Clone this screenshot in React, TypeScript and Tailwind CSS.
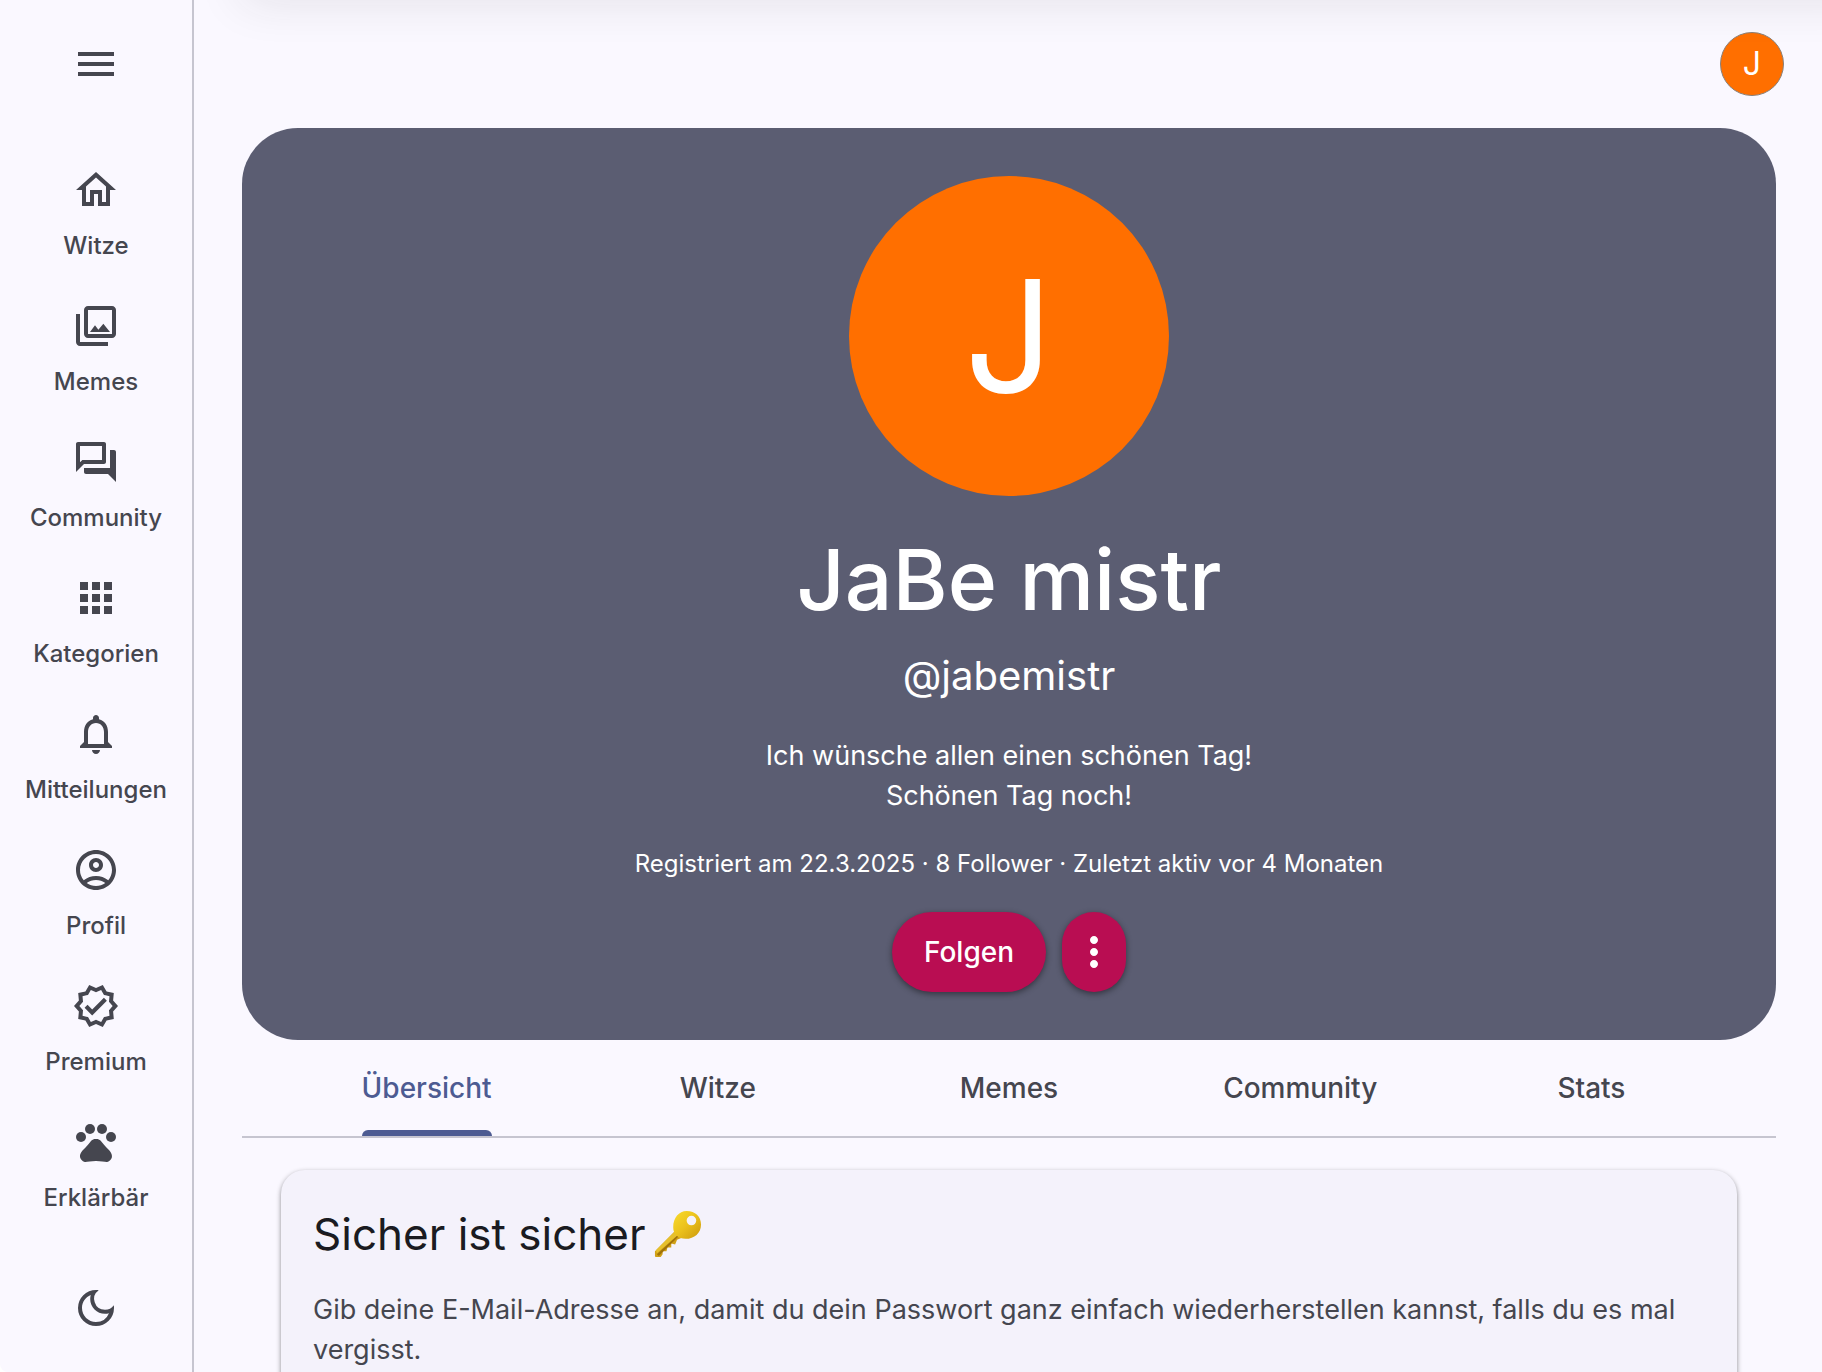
import { MdMenu, MdOutlineHome, MdOutlinePhotoLibrary, MdOutlineForum, MdApps, MdNotificationsNone, MdOutlineAccountCircle, MdOutlineVerified, MdPets, MdOutlineDarkMode, MdMoreVert } from 'react-icons/md';

const navItems = [
  { label: 'Witze', Icon: MdOutlineHome },
  { label: 'Memes', Icon: MdOutlinePhotoLibrary },
  { label: 'Community', Icon: MdOutlineForum },
  { label: 'Kategorien', Icon: MdApps },
  { label: 'Mitteilungen', Icon: MdNotificationsNone },
  { label: 'Profil', Icon: MdOutlineAccountCircle },
  { label: 'Premium', Icon: MdOutlineVerified },
  { label: 'Erklärbär', Icon: MdPets },
];

const tabs = ['Übersicht', 'Witze', 'Memes', 'Community', 'Stats'];

function KeyIcon() {
  return (
    <svg viewBox="0 0 50 50" className="size-12 shrink-0" role="img" aria-label="Schlüssel">
      <defs>
        <linearGradient id="keyBow" x1="0" y1="0" x2="1" y2="1">
          <stop offset="0" stopColor="#f9dc2e" />
          <stop offset="0.5" stopColor="#ebc11c" />
          <stop offset="1" stopColor="#cb980e" />
        </linearGradient>
      </defs>
      <path d="M22 22 L1 43 V48 Q1 49 2 49 H7 L9 46 L9 43 L13 43 L14 39 L18 39 L18 35 L22 36 L24 31 L29 29 Z" fill="#d0a016" />
      <path d="M22 22 L2 42 L3 45 L26 25 Z" fill="#e6c02c" />
      <path d="M3 46 L25 26 L26 27 L5 48 Z" fill="#a07208" />
      <path fillRule="evenodd" d="M34 1 C43 1 49 7 49 15 C49 24 42 30 33 30 C25 30 20 25 20 18 C20 8 26 1 34 1 Z M39 6 A5 5 0 1 0 39 16 A5 5 0 1 0 39 6 Z" fill="url(#keyBow)" />
    </svg>
  );
}

export default function App() {
  return (
    <div className="h-screen overflow-hidden bg-white font-['Inter','Liberation_Sans',sans-serif] text-[#45464f]">
      <div className="flex h-full overflow-hidden rounded-bl-lg bg-[#faf8ff]">
        <aside className="flex w-[194px] shrink-0 flex-col items-center border-r-2 border-[#c6c5d0]">
          <button type="button" aria-label="Menü" className="flex h-32 w-full items-center justify-center">
            <MdMenu className="size-12" />
          </button>
          <nav className="flex w-full flex-col pt-[38px]">
            {navItems.map(({ label, Icon }) => (
              <a key={label} href="#" className="flex h-[136px] flex-col items-center gap-4">
                <Icon className="size-12" />
                <span className="text-2xl font-medium">{label}</span>
              </a>
            ))}
          </nav>
          <button type="button" aria-label="Dunkles Design" className="mt-[30px] flex size-12 items-center justify-center">
            <MdOutlineDarkMode className="size-12" />
          </button>
        </aside>

        <main className="relative min-w-0 flex-1 overflow-hidden">
          <div className="pointer-events-none absolute -top-10 -right-12 left-12 h-10 shadow-[0_0_48px_rgba(40,40,40,0.12)]" />
          <header className="flex h-32 items-center justify-end px-[38px]">
            <button type="button" aria-label="Konto" className="flex size-16 items-center justify-center rounded-full border border-[#8a8078] bg-[#ff6f00] text-[32px] text-white">
              J
            </button>
          </header>

          <div className="mr-[46px] ml-12">
            <section className="flex flex-col items-center rounded-[56px] bg-[#5b5d72] py-12 text-center text-white">
              <div className="flex size-80 items-center justify-center rounded-full bg-[#ff6f00] text-[156px] leading-none">J</div>
              <h1 className="mt-8 text-[84px] leading-[104px] font-medium">JaBe mistr</h1>
              <p className="mt-4 text-[40px] leading-[56px]">@jabemistr</p>
              <p className="mt-8 text-[27px] leading-10">
                Ich wünsche allen einen schönen Tag!
                <br />
                Schönen Tag noch!
              </p>
              <p className="mt-8 text-2xl">Registriert am 22.3.2025 · 8 Follower · Zuletzt aktiv vor 4 Monaten</p>
              <div className="mt-8 flex gap-4">
                <button type="button" className="flex h-20 items-center rounded-[40px] bg-[#b90d52] px-8 text-[28px] font-medium shadow-[0_2px_6px_rgba(0,0,0,0.45)]">
                  Folgen
                </button>
                <button type="button" aria-label="Mehr" className="flex h-20 w-16 items-center justify-center rounded-[40px] bg-[#b90d52] shadow-[0_2px_6px_rgba(0,0,0,0.45)]">
                  <MdMoreVert className="size-12" />
                </button>
              </div>
            </section>

            <div role="tablist" className="flex h-[98px] border-b-2 border-[#c6c5d0] px-[39px]">
              {tabs.map((tab, i) => (
                <button key={tab} type="button" role="tab" aria-selected={i === 0} className="group flex flex-1 justify-center text-[28px] font-medium aria-selected:text-[#4d5b92]">
                  <span className="flex h-full flex-col items-center justify-between">
                    <span className="pt-7 leading-10">{tab}</span>
                    <span className="h-1.5 w-full rounded-t-md group-aria-selected:bg-[#4d5b92]" />
                  </span>
                </button>
              ))}
            </div>

            <section className="mx-[39px] mt-8 rounded-[24px] bg-[#f4f2fb] p-8 shadow-[0_2px_5px_rgba(0,0,0,0.45)]">
              <h2 className="flex items-center gap-2 text-[44px] leading-[64px] text-[#1a1b21]">
                Sicher ist sicher
                <KeyIcon />
              </h2>
              <p className="mt-6 text-[27px] leading-10">
                Gib deine E-Mail-Adresse an, damit du dein Passwort ganz einfach wiederherstellen kannst, falls du es mal vergisst.
              </p>
            </section>
          </div>
        </main>
      </div>
    </div>
  );
}
